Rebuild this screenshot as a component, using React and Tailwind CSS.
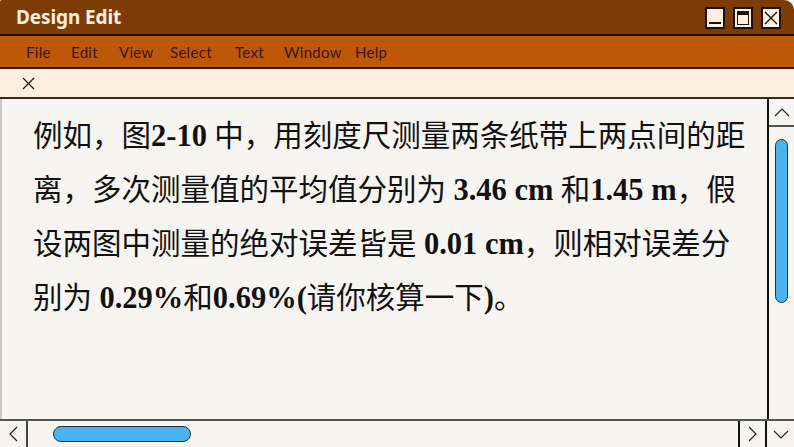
import React from "react";

const B = ({ children }) => <span className="font-bold text-[30.5px]">{children}</span>;

export default function App() {
  return (
    <div className="w-[794px] h-[447px] flex flex-col overflow-hidden bg-[#f7f5f2]">
      {/* Title bar */}
      <div className="h-[36px] shrink-0 bg-[#7d3c06] rounded-tr-[10px] rounded-tl-[2px] border-b-2 border-[#1e1208] flex items-center justify-between pl-[16px] pr-[13px]">
        <span className="text-[#fdf1e0] font-bold text-[19px] leading-none font-['Noto_Sans',sans-serif] tracking-[-0.1px]">
          Design Edit
        </span>
        <div className="flex gap-[8px] items-center pt-[1px]">
          <div className="w-[20px] h-[22px] bg-[#fdf0e0] border-2 border-[#1a1008] flex items-end justify-center pb-[3px]">
            <div className="w-[12px] h-[2px] bg-[#1a1008]" />
          </div>
          <div className="w-[20px] h-[22px] bg-[#fdf0e0] border-2 border-[#1a1008] flex items-center justify-center">
            <div className="w-[12px] h-[14px] border-[1.5px] border-[#1a1008] border-t-[4px]" />
          </div>
          <div className="w-[20px] h-[22px] bg-[#fdf0e0] border-2 border-[#1a1008] flex items-center justify-center">
            <svg width="14" height="14" viewBox="0 0 14 14">
              <path d="M1 1L13 13M13 1L1 13" stroke="#1a1008" strokeWidth="1.4" />
            </svg>
          </div>
        </div>
      </div>
      {/* Menu bar */}
      <div className="h-[33px] shrink-0 bg-[#bf5709] border-b-2 border-[#2a1608] flex items-center pl-[26px] pt-[2px] text-[15px] tracking-[0.3px] text-[#3a1606] font-['Lato',sans-serif]">
        <span className="w-[45px]">File</span>
        <span className="w-[48px]">Edit</span>
        <span className="w-[51px]">View</span>
        <span className="w-[65px]">Select</span>
        <span className="w-[49px]">Text</span>
        <span className="w-[71px]">Window</span>
        <span>Help</span>
      </div>
      {/* Tab bar */}
      <div className="h-[30px] shrink-0 bg-[#fdefdf] border-b-2 border-[#2a2a2a] flex items-center pl-[22px]">
        <svg width="13" height="13" viewBox="0 0 13 13">
          <path d="M1 1L12 12M12 1L1 12" stroke="#1a1a1a" strokeWidth="1.3" />
        </svg>
      </div>
      {/* Main */}
      <div className="flex-1 flex min-h-0">
        <div className="flex-1 border-l-2 border-[#c9c9c6] bg-[#f7f5f2] pl-[31px] pt-[10px] text-[29.5px] leading-[54px] text-[#111] font-['Liberation_Serif','Noto_Sans_CJK_SC',serif] whitespace-nowrap overflow-hidden">
          <div>例如，图<B>2-10</B> 中，用刻度尺测量两条纸带上两点间的距</div>
          <div>离，多次测量值的平均值分别为 <B>3.46 cm</B> 和<B>1.45 m</B>，假</div>
          <div>设两图中测量的绝对误差皆是 <B>0.01 cm</B>，则相对误差分</div>
          <div>别为 <B>0.29%</B>和<B>0.69%(</B>请你核算一下<B>)</B>。</div>
        </div>
        <div className="w-[27px] shrink-0 border-l-2 border-[#111] flex flex-col">
          <div className="h-[28px] border-b-2 border-[#555] flex items-center justify-center">
            <svg width="16" height="9" viewBox="0 0 16 9">
              <path d="M1 8L8 1L15 8" fill="none" stroke="#222" strokeWidth="1.2" />
            </svg>
          </div>
          <div className="flex-1 pt-[12px] pl-[6px]">
            <div className="w-[13px] h-[164px] rounded-full bg-[#4bb4ef] border border-[#1d3140]" />
          </div>
        </div>
      </div>
      {/* Bottom scrollbar */}
      <div className="h-[28px] shrink-0 border-t-2 border-[#555] flex">
        <div className="w-[28px] border-r-2 border-[#444] flex items-center justify-center">
          <svg width="9" height="16" viewBox="0 0 9 16">
            <path d="M8 1L1 8L8 15" fill="none" stroke="#222" strokeWidth="1.2" />
          </svg>
        </div>
        <div className="flex-1 pl-[25px] pt-[5px]">
          <div className="w-[138px] h-[16px] rounded-full bg-[#4bb4ef] border border-[#1d3140]" />
        </div>
        <div className="w-[29px] border-l-2 border-r-2 border-[#111] flex items-center justify-center">
          <svg width="9" height="16" viewBox="0 0 9 16">
            <path d="M1 1L8 8L1 15" fill="none" stroke="#222" strokeWidth="1.2" />
          </svg>
        </div>
        <div className="w-[27px] flex items-center justify-center">
          <svg width="16" height="9" viewBox="0 0 16 9">
            <path d="M1 1L8 8L15 1" fill="none" stroke="#222" strokeWidth="1.2" />
          </svg>
        </div>
      </div>
    </div>
  );
}
